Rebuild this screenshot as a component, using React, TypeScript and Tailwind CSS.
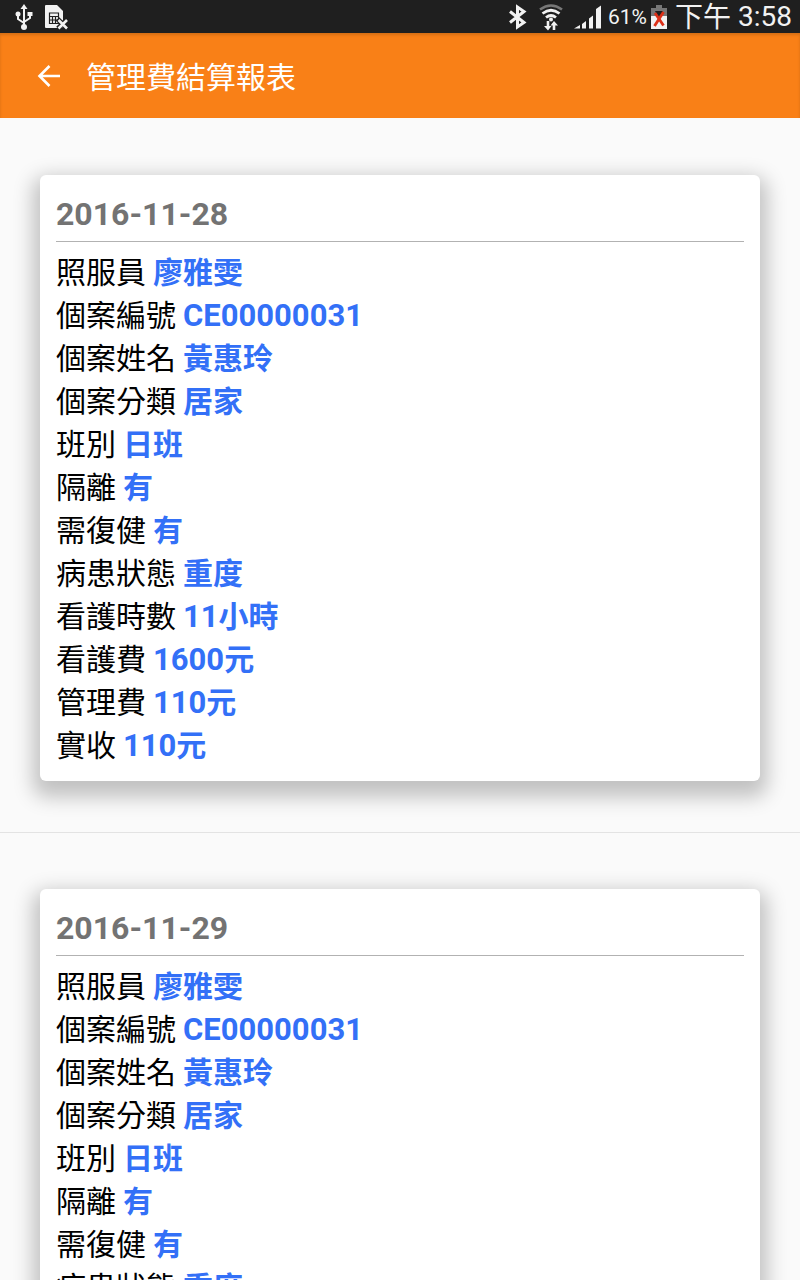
import React from 'react';

interface Field {
  label: string;
  value?: string;
  // Number or case code, set before the value's own characters
  code?: string;
}

interface Report {
  date: string;
  fields: Field[];
}

// Both days hold the same case data
const caseFields: Field[] = [
  { label: '照服員', value: '廖雅雯' },
  { label: '個案編號', code: 'CE00000031' },
  { label: '個案姓名', value: '黃惠玲' },
  { label: '個案分類', value: '居家' },
  { label: '班別', value: '日班' },
  { label: '隔離', value: '有' },
  { label: '需復健', value: '有' },
  { label: '病患狀態', value: '重度' },
  { label: '看護時數', code: '11', value: '小時' },
  { label: '看護費', code: '1600', value: '元' },
  { label: '管理費', code: '110', value: '元' },
  { label: '實收', code: '110', value: '元' },
];

const reports: Report[] = [
  { date: '2016-11-28', fields: caseFields },
  { date: '2016-11-29', fields: caseFields },
];

// --- STATUS BAR ICONS ---
const UsbIcon = () => (
  <svg width="18" height="28" viewBox="0 0 18 28" fill="none" stroke="#f2f2f2" strokeWidth="2">
    <path d="M9 5v18M3 12v4l6 4M15 12v3l-6 4" />
    <path d="M9 1l3.500 5h-7z" fill="#f2f2f2" stroke="none" />
    <circle cx="9" cy="24" r="3" fill="#f2f2f2" stroke="none" />
    <circle cx="3" cy="11" r="2.500" fill="#f2f2f2" stroke="none" />
    <path d="M12.500 9h5v4h-5z" fill="#f2f2f2" stroke="none" />
  </svg>
);

const SimIcon = () => (
  <svg width="24" height="26" viewBox="0 0 24 26">
    <path d="M1 1h11l6 6v17H1a1 1 0 0 1-1-1V2a1 1 0 0 1 1-1z" fill="#f2f2f2" />
    <path d="M4.500 9h9v10.500h-9zM4.500 12.500h9M4.500 16h9M7.500 12.500v7M10.500 12.500v7" fill="none" stroke="#1f1f1f" strokeWidth="1.200" />
    <path d="M12.500 15l9.500 9.500M22.500 15L13 24.500" stroke="#1f1f1f" strokeWidth="5" />
    <path d="M13.500 16l8.500 8.500M22 16l-8.500 8.500" stroke="#f2f2f2" strokeWidth="2.600" />
  </svg>
);

const BluetoothIcon = () => (
  <svg width="20" height="26" viewBox="0 0 20 26" fill="none" stroke="#f2f2f2" strokeWidth="3">
    <path d="M3 7.500l14 11L10.500 23V3L17 7.500l-14 11" />
  </svg>
);

const WifiIcon = () => (
  <svg width="26" height="28" viewBox="0 0 26 28" fill="none">
    <path d="M2 6.500Q13-1.500 24 6.500" stroke="#777" strokeWidth="2.600" />
    <path d="M4.500 10.500Q13 4 21.500 10.500M8 14.500Q13 10.500 18 14.500" stroke="#f2f2f2" strokeWidth="2.800" />
    <circle cx="13" cy="16.500" r="2" fill="#f2f2f2" />
    <path d="M10 18v7M16 27v-7" stroke="#f2f2f2" strokeWidth="2.600" />
    <path d="M6 23h7.500L10 27.500zM12.500 22.500H20L16 18z" fill="#f2f2f2" />
  </svg>
);

const SignalIcon = () => (
  <svg width="28" height="24" viewBox="0 0 28 24" fill="#f2f2f2">
    <path d="M0 23.500l6-3.500v3.500zM8 19l4-3v7.500H8zM15 13.500l4-3v13h-4zM22 4l5-3.500v23h-5z" />
  </svg>
);

const BatteryIcon = () => (
  <svg width="16" height="24" viewBox="0 0 16 24">
    <path d="M5 0h6v3h5v8H0V3h5z" fill="#777" />
    <path d="M0 11h16v13H0z" fill="#f2f2f2" />
    <path d="M4 6h8l-3 6H7z" fill="#1f1f1f" />
    <path d="M4 8l8.500 12.500M12.500 7L3.500 21" stroke="#dd3018" strokeWidth="2.800" fill="none" />
  </svg>
);

const StatusBar = () => (
  <div className="flex h-[33px] shrink-0 items-center justify-between bg-[#1f1f1f] pr-2 pl-[15px] text-[#f2f2f2]">
    <div className="flex items-center gap-3">
      <UsbIcon />
      <SimIcon />
    </div>
    <div className="flex items-center">
      <BluetoothIcon />
      <div className="ml-[11px]">
        <WifiIcon />
      </div>
      <div className="ml-[10px]">
        <SignalIcon />
      </div>
      <span className="ml-[6px] text-[21px] leading-8">61%</span>
      <div className="ml-1">
        <BatteryIcon />
      </div>
      <span className="ml-2 flex items-center gap-[7px] text-[28px]">
        <span className="pt-[3px] leading-[30px]">下午</span>
        <span className="leading-8">3:58</span>
      </span>
    </div>
  </div>
);

const ReportCard = ({ report }: { report: Report }) => (
  <article className="rounded-md bg-white px-4 pt-[19px] pb-[14px] shadow-[0_9px_20px_7px_rgba(0,0,0,0.23)]">
    <h2 className="border-b border-[#b2b2b2] pb-[7px] text-[32px] leading-10 font-bold text-[#737373]">{report.date}</h2>
    <dl className="pt-[9px] text-[30px] leading-[43px]">
      {report.fields.map((field) => (
        <div key={field.label} className="flex h-[43px] gap-[7px]">
          <dt className="text-black">{field.label}</dt>
          <dd className="flex font-bold text-[#3370f7]">
            {field.code && <span className="text-[31px]">{field.code}</span>}
            {field.value && <span>{field.value}</span>}
          </dd>
        </div>
      ))}
    </dl>
  </article>
);

export default function App() {
  return (
    <div className="flex h-screen flex-col overflow-hidden bg-[#fafafa] font-[Roboto,'Noto_Sans_CJK_TC',sans-serif]">
      <StatusBar />

      <header className="flex h-[85px] shrink-0 items-center bg-[#f98017] pl-9 text-white shadow-[inset_0_2px_3px_rgba(0,0,0,0.15)]">
        <button type="button" aria-label="返回" className="mr-6">
          <svg width="26" height="26" viewBox="0 0 26 26" fill="none" stroke="currentColor" strokeWidth="2.600">
            <path d="M24 13H4M13.500 3L3.500 13l10 10" />
          </svg>
        </button>
        <h1 className="pt-1 text-[30px] leading-10">管理費結算報表</h1>
      </header>

      <main className="min-h-0 flex-1 overflow-y-auto pt-px [scrollbar-width:none]">
        <ul>
          {reports.map((report) => (
            <li key={report.date} className="border-b border-[#e3e3e3] px-10 pt-14 pb-[51px]">
              <ReportCard report={report} />
            </li>
          ))}
        </ul>
      </main>
    </div>
  );
}
